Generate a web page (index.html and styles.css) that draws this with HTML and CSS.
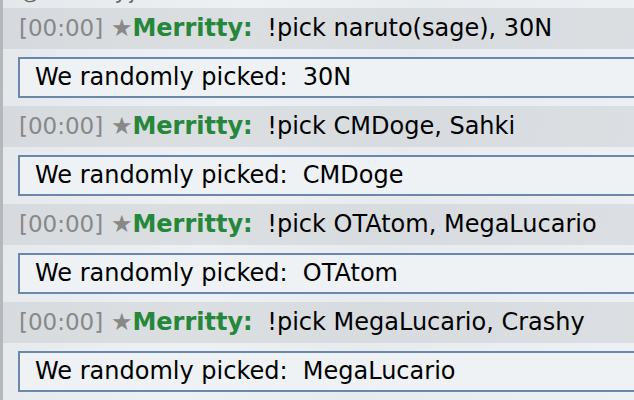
FILE: index.html
```html
<!DOCTYPE html>
<html lang="en">
<head>
    <meta charset="UTF-8">
    <meta name="viewport" content="width=device-width, initial-scale=1.0">
    <title>Chat</title>
    <link rel="stylesheet" href="styles.css">
</head>
<body>
    <div class="chat-log">
        <div class="notice"><span>@ DoubleJ joined</span></div>

        <div class="chat">
            <span class="time">[00:00]</span> <strong><span class="rank">&#9733;</span><span class="user">Merritty:</span></strong> <em>!pick naruto(sage), 30N</em>
        </div>
        <div class="infobox">We randomly picked:&nbsp; 30N</div>

        <div class="chat">
            <span class="time">[00:00]</span> <strong><span class="rank">&#9733;</span><span class="user">Merritty:</span></strong> <em>!pick CMDoge, Sahki</em>
        </div>
        <div class="infobox">We randomly picked:&nbsp; CMDoge</div>

        <div class="chat">
            <span class="time">[00:00]</span> <strong><span class="rank">&#9733;</span><span class="user">Merritty:</span></strong> <em>!pick OTAtom, MegaLucario</em>
        </div>
        <div class="infobox">We randomly picked:&nbsp; OTAtom</div>

        <div class="chat">
            <span class="time">[00:00]</span> <strong><span class="rank">&#9733;</span><span class="user">Merritty:</span></strong> <em>!pick MegaLucario, Crashy</em>
        </div>
        <div class="infobox">We randomly picked:&nbsp; MegaLucario</div>
    </div>
</body>
</html>
```

FILE: styles.css
```css
html, body {
    margin: 0;
    height: 100%;
    overflow: hidden;
}
body {
    background: linear-gradient(100deg, #e4e8eb 0%, #eef1f3 35%, #e7ebee 60%, #eef1f4 100%);
    font-family: "DejaVu Sans", Verdana, sans-serif;
    font-size: 24px;
    color: #000;
}
.chat-log {
    width: 680px;
    min-height: 100%;
    border-left: 3px solid #b4b8bc;
}
.notice {
    display: flow-root;
    height: 8px;
    padding-left: 17px;
    color: #666;
    font-size: 20px;
}
.notice span {
    display: block;
    margin-top: -20px;
    line-height: 24px;
}
.chat {
    background: rgba(198, 202, 207, 0.48);
    padding: 7px 16px;
    line-height: 27px;
    margin-bottom: 8px;
}
.time {
    color: #888;
    font-size: 23px;
}
.rank {
    color: #888;
    font-weight: normal;
}
.user {
    color: #25873a;
    margin-right: 7px;
}
.chat em {
    font-style: normal;
}
.infobox {
    margin: 0 0 8px 15px;
    border: 2px solid #6a88aa;
    background: #eef2f5;
    padding: 5px 15px;
    line-height: 27px;
}
```
